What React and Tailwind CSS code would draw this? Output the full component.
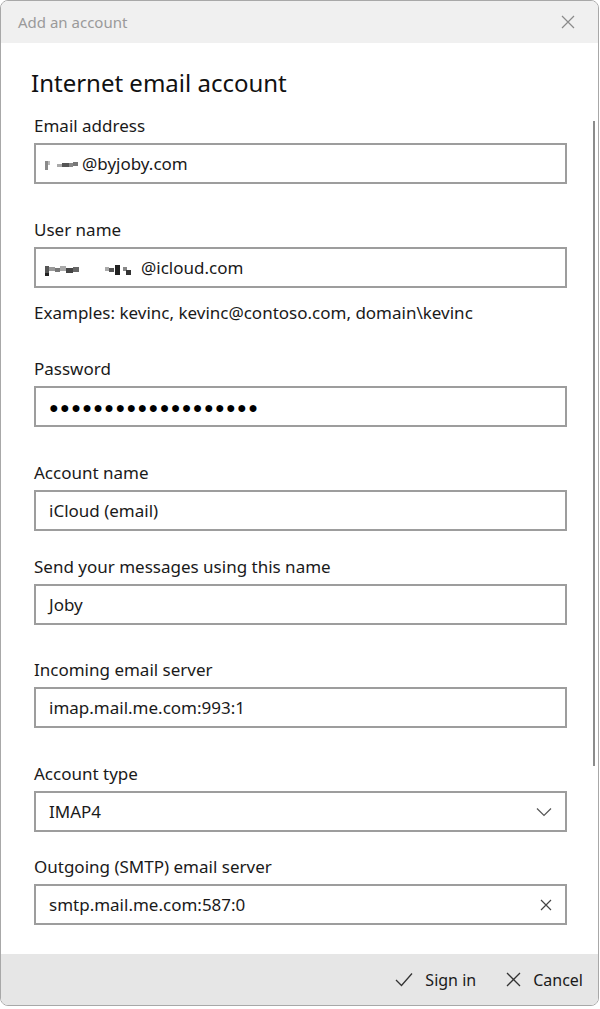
import React from 'react';

const font = { fontFamily: '"Noto Sans", "Open Sans", sans-serif' };

const Blur = ({ blocks }) => (
  <svg width={blocks.w} height="18" className="inline-block align-middle -ml-[4px] mr-[1px]">
    {blocks.r.map((b, i) => (
      <rect key={i} x={b[0]} y={b[1]} width={b[2]} height={b[3]} fill={b[4]} />
    ))}
  </svg>
);

const Field = ({ label, children, gap }) => (
  <div className={gap}>
    <div className="h-[22px] leading-[22px] text-[17px] text-[#1a1a1a]">{label}</div>
    <div className="mt-[6px] h-[41px] border-2 border-[#9d9d9d] flex items-center pl-[13px] pr-[12px] text-[17px] text-[#1a1a1a]">
      {children}
    </div>
  </div>
);

const App = () => {
  return (
    <div className="w-[600px] h-[1009px] bg-white" style={font}>
      <div className="w-[599px] h-[1006px] border border-[#a8a8a8] rounded-lg overflow-hidden flex flex-col">
        <div className="h-[42px] bg-[#f0f0f0] flex items-center justify-between pl-[17px] pr-[23px] shrink-0">
          <span className="text-[15px] text-[#9a9a9a]">Add an account</span>
          <svg width="14" height="14" viewBox="0 0 14 14">
            <path d="M1 1L13 13M13 1L1 13" stroke="#8a8a8a" strokeWidth="1.2" fill="none" />
          </svg>
        </div>

        <div className="flex-1 relative bg-white">
          <div className="absolute right-[3px] top-[78px] w-[2px] h-[645px] bg-[#8c8c8c]" />
          <div className="pl-[33px] pr-[31px]">
            <h1 className="mt-[24px] text-[24px] leading-[32px] text-[#111] -ml-[3px]">Internet email account</h1>

            <Field label="Email address" gap="mt-[16px]">
              <Blur
                blocks={{
                  w: 36,
                  r: [
                    [0, 6, 3, 9, '#8a8a8a'],
                    [3, 6, 2, 4, '#bbb'],
                    [12, 9, 5, 3, '#aaa'],
                    [17, 8, 7, 4, '#555'],
                    [24, 8, 4, 4, '#888'],
                    [28, 7, 5, 4, '#777'],
                  ],
                }}
              />
              <span>@byjoby.com</span>
            </Field>

            <Field label="User name" gap="mt-[35px]">
              <Blur
                blocks={{
                  w: 95,
                  r: [
                    [0, 7, 4, 10, '#555'],
                    [0, 14, 4, 3, '#222'],
                    [4, 8, 6, 4, '#999'],
                    [10, 9, 5, 4, '#777'],
                    [15, 7, 6, 5, '#aaa'],
                    [21, 9, 7, 5, '#444'],
                    [28, 8, 6, 5, '#666'],
                    [60, 8, 4, 4, '#aaa'],
                    [64, 9, 5, 4, '#555'],
                    [70, 6, 5, 10, '#222'],
                    [78, 8, 4, 4, '#888'],
                    [81, 11, 5, 5, '#333'],
                  ],
                }}
              />
              <span>@icloud.com</span>
            </Field>

            <div className="mt-[14px] h-[22px] leading-[22px] text-[17px] text-[#1a1a1a]">
              Examples: kevinc, kevinc@contoso.com, domain\kevinc
            </div>

            <Field label="Password" gap="mt-[34px]">
              <span className="text-[16px] tracking-[1.4px] text-black">●●●●●●●●●●●●●●●●●●●</span>
            </Field>

            <Field label="Account name" gap="mt-[35px]">
              iCloud (email)
            </Field>

            <Field label="Send your messages using this name" gap="mt-[25px]">
              Joby
            </Field>

            <Field label="Incoming email server" gap="mt-[34px]">
              imap.mail.me.com:993:1
            </Field>

            <Field label="Account type" gap="mt-[35px]">
              <span className="flex-1">IMAP4</span>
              <svg width="16" height="10" viewBox="0 0 16 10" className="mr-[1px]">
                <path d="M1 1.5L8 8.5L15 1.5" stroke="#555" strokeWidth="1.2" fill="none" />
              </svg>
            </Field>

            <Field label="Outgoing (SMTP) email server" gap="mt-[24px]">
              <span className="flex-1">smtp.mail.me.com:587:0</span>
              <svg width="12" height="12" viewBox="0 0 12 12" className="mr-[1px]">
                <path d="M1 1L11 11M11 1L1 11" stroke="#444" strokeWidth="1.2" fill="none" />
              </svg>
            </Field>
          </div>
        </div>

        <div className="h-[51px] bg-[#e6e6e6] flex items-center justify-end pr-[15px] shrink-0 text-[16px] text-[#1a1a1a]">
          <div className="flex items-center gap-[12px]">
            <svg width="18" height="15" viewBox="0 0 18 15">
              <path d="M1 8L6.5 13.5L17 1.5" stroke="#333" strokeWidth="1.3" fill="none" />
            </svg>
            <span>Sign in</span>
          </div>
          <div className="flex items-center gap-[12px] ml-[30px]">
            <svg width="15" height="15" viewBox="0 0 15 15">
              <path d="M1 1L14 14M14 1L1 14" stroke="#333" strokeWidth="1.3" fill="none" />
            </svg>
            <span>Cancel</span>
          </div>
        </div>
      </div>
    </div>
  );
};

export default App;
